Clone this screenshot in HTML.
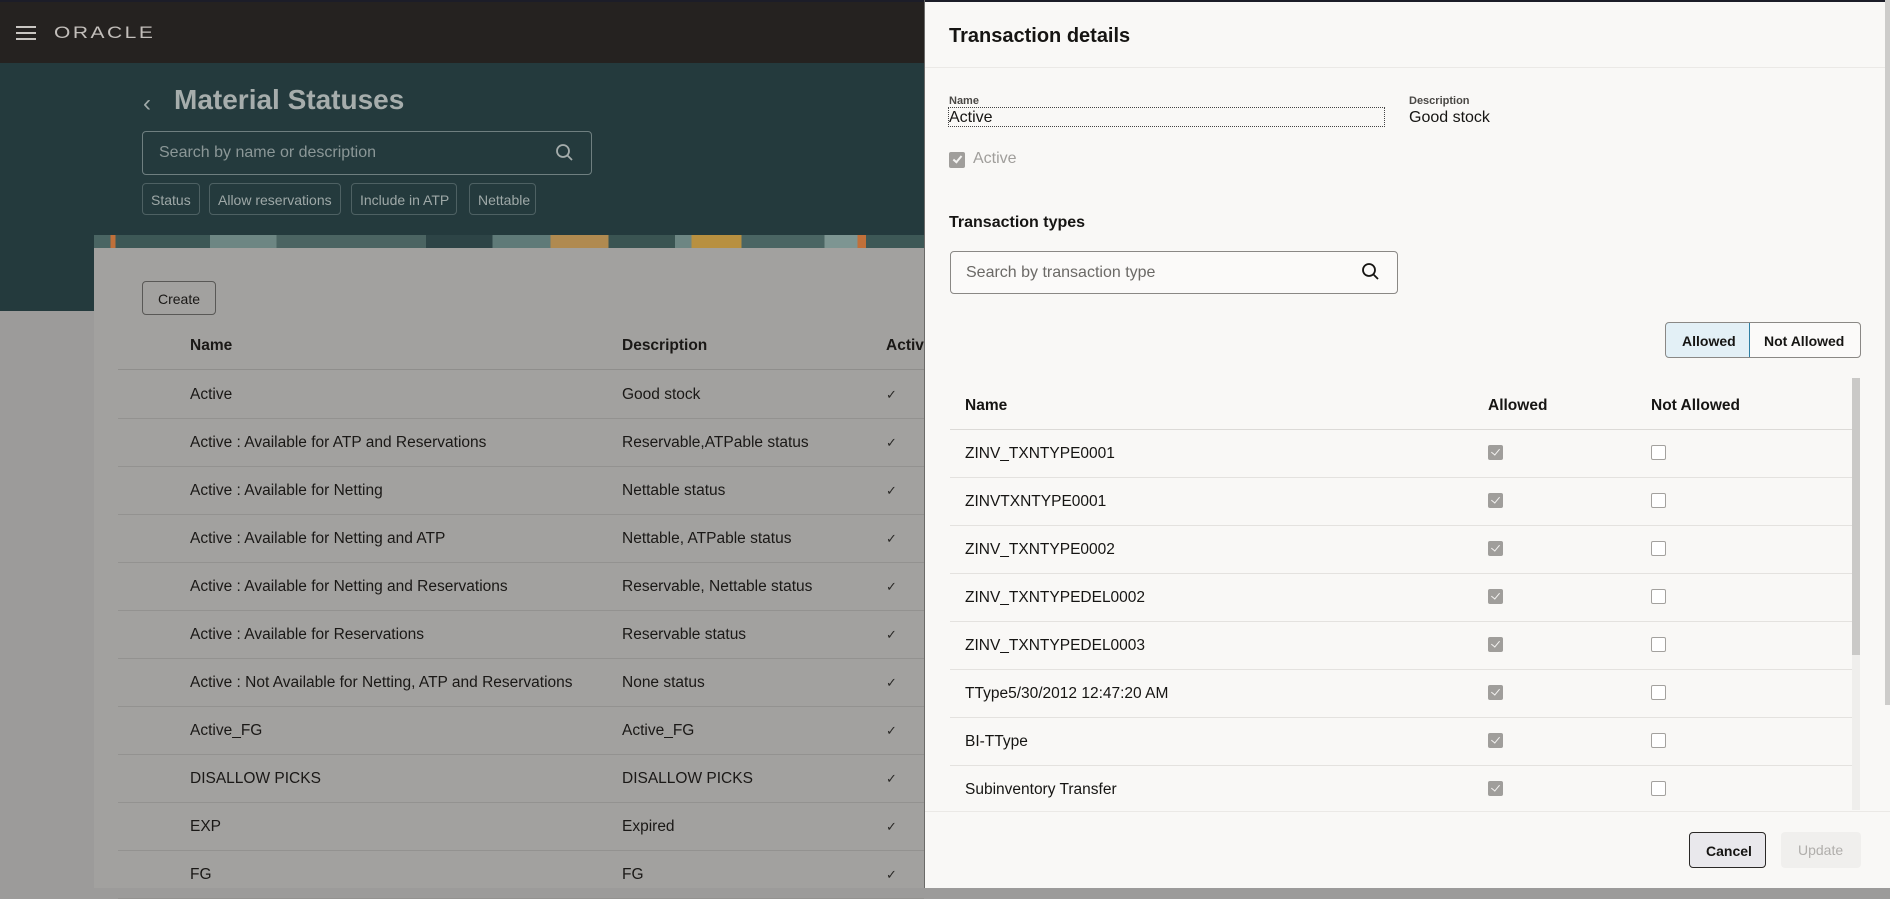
<!DOCTYPE html>
<html><head><meta charset="utf-8"><style>
*{box-sizing:border-box;margin:0;padding:0}
body{width:1890px;height:888px;overflow:hidden;position:relative;font-family:"Liberation Sans",sans-serif;background:#9c9b9a}
.a{position:absolute}
.top{left:0;top:0;width:1890px;height:63px;background:#252220;border-top:2px solid #1c1d28}
.teal{left:0;top:63px;width:924px;height:248px;background:#243a3d}
.card{left:94px;top:235px;width:830px;height:653px;background:#a2a19f}
.strip{left:94px;top:235px;width:830px;height:13px;background:linear-gradient(90deg,#4a6563 0 2%,#c0703a 2% 2.6%,#3d5856 2.6% 14%,#6d8683 14% 22%,#4b6462 22% 40%,#2d4446 40% 48%,#5f7a78 48% 55%,#b08a50 55% 62%,#3a5452 62% 70%,#6d8683 70% 72%,#b89040 72% 78%,#4a6563 78% 88%,#7d9592 88% 92%,#c0703a 92% 93%,#3d5856 93%)}
.row{position:absolute;left:118px;width:806px;height:48px;border-bottom:1px solid #939290;font-size:15.5px;color:#1a1816}
.row span{position:absolute;top:15px}
.row span.k{font-size:13px;color:#2a2826;top:16px}
.p{left:924px;top:0;width:966px;height:888px;background:#f9f8f6;border-left:1px solid #6b6a68}
.tr{position:absolute;left:25px;width:902px;height:48px;border-bottom:1px solid #e4e2df;font-size:15.5px;color:#161513}
.tr span{position:absolute;top:15px;left:15px}
.cb{position:absolute;width:15px;height:15px;border-radius:2px;top:15px}
.cb.on{background:#a09e9b;left:538px}
.cb.on::after{content:"";position:absolute;left:5px;top:2px;width:4px;height:7px;border:solid #f4f3f1;border-width:0 1.5px 1.5px 0;transform:rotate(40deg)}
.cb.off{border:1px solid #a3a19e;left:701px;background:#fff}
</style></head><body>
<div class="a top"></div>
<div class="a" style="left:16px;top:26px;width:20px;height:2px;background:#c9c6c2;box-shadow:0 6px 0 #c9c6c2,0 12px 0 #c9c6c2"></div>
<div class="a" style="left:54px;top:21px;font-size:21px;color:#c2beba;letter-spacing:2.5px;transform:scaleY(0.8);transform-origin:left center">ORACLE</div>
<div class="a teal"></div>
<div class="a" style="left:143px;top:90px;font-size:24px;color:#9fa9a8">‹</div>
<div class="a" style="left:174px;top:84px;font-size:28px;font-weight:bold;color:#a6adac">Material Statuses</div>
<div class="a" style="left:142px;top:131px;width:450px;height:44px;border:1px solid #6f7f80;border-radius:4px"></div>
<div class="a" style="left:159px;top:144px;font-size:16px;color:#8b9797">Search by name or description</div>
<svg class="a" style="left:555px;top:143px" width="20" height="20" viewBox="0 0 20 20"><circle cx="8" cy="8" r="6" fill="none" stroke="#a5adac" stroke-width="1.8"/><path d="M12.5 12.5L17 17" stroke="#a5adac" stroke-width="1.8"/></svg>
<div class="a" style="left:142px;top:183px;width:58px;height:32px;border:1px solid #4e6163;border-radius:4px;color:#9ea8a7;font-size:14px;padding:8px 0 0 8px">Status</div>
<div class="a" style="left:209px;top:183px;width:132px;height:32px;border:1px solid #4e6163;border-radius:4px;color:#9ea8a7;font-size:14px;padding:8px 0 0 8px">Allow reservations</div>
<div class="a" style="left:351px;top:183px;width:106px;height:32px;border:1px solid #4e6163;border-radius:4px;color:#9ea8a7;font-size:14px;padding:8px 0 0 8px">Include in ATP</div>
<div class="a" style="left:469px;top:183px;width:67px;height:32px;border:1px solid #4e6163;border-radius:4px;color:#9ea8a7;font-size:14px;padding:8px 0 0 8px">Nettable</div>
<div class="a card"></div>
<div class="a strip"></div>
<div class="a" style="left:142px;top:281px;width:74px;height:34px;border:1px solid #595856;border-radius:4px;font-size:14px;color:#1a1816;padding:9px 0 0 15px">Create</div>
<div class="row" style="top:322px;border-bottom-color:#8f8e8c"><span style="left:72px;font-weight:bold;font-size:15.5px">Name</span><span style="left:504px;font-weight:bold">Description</span><span style="left:768px;font-weight:bold">Activ</span></div>
<div class="row" style="top:371px"><span style="left:72px">Active</span><span style="left:504px">Good stock</span><span class="k" style="left:768px">✓</span></div>
<div class="row" style="top:419px"><span style="left:72px">Active : Available for ATP and Reservations</span><span style="left:504px">Reservable,ATPable status</span><span class="k" style="left:768px">✓</span></div>
<div class="row" style="top:467px"><span style="left:72px">Active : Available for Netting</span><span style="left:504px">Nettable status</span><span class="k" style="left:768px">✓</span></div>
<div class="row" style="top:515px"><span style="left:72px">Active : Available for Netting and ATP</span><span style="left:504px">Nettable, ATPable status</span><span class="k" style="left:768px">✓</span></div>
<div class="row" style="top:563px"><span style="left:72px">Active : Available for Netting and Reservations</span><span style="left:504px">Reservable, Nettable status</span><span class="k" style="left:768px">✓</span></div>
<div class="row" style="top:611px"><span style="left:72px">Active : Available for Reservations</span><span style="left:504px">Reservable status</span><span class="k" style="left:768px">✓</span></div>
<div class="row" style="top:659px"><span style="left:72px">Active : Not Available for Netting, ATP and Reservations</span><span style="left:504px">None status</span><span class="k" style="left:768px">✓</span></div>
<div class="row" style="top:707px"><span style="left:72px">Active_FG</span><span style="left:504px">Active_FG</span><span class="k" style="left:768px">✓</span></div>
<div class="row" style="top:755px"><span style="left:72px">DISALLOW PICKS</span><span style="left:504px">DISALLOW PICKS</span><span class="k" style="left:768px">✓</span></div>
<div class="row" style="top:803px"><span style="left:72px">EXP</span><span style="left:504px">Expired</span><span class="k" style="left:768px">✓</span></div>
<div class="row" style="top:851px"><span style="left:72px">FG</span><span style="left:504px">FG</span><span class="k" style="left:768px">✓</span></div>

<div class="a p">
<div class="a" style="left:0;top:0;width:966px;height:2px;background:#1c1d28"></div>
<div class="a" style="left:24px;top:25px;font-size:20px;font-weight:bold;color:#161513">Transaction details</div>
<div class="a" style="left:0;top:67px;width:966px;height:1px;background:#ebe9e6"></div>
<div class="a" style="left:24px;top:95px;font-size:11px;color:#4a4845;font-weight:bold">Name</div>
<div class="a" style="left:23px;top:107px;width:437px;height:20px;border:1px dotted #444"></div>
<div class="a" style="left:24px;top:109px;font-size:16px;color:#161513">Active</div>
<div class="a" style="left:484px;top:95px;font-size:11px;color:#4a4845;font-weight:bold">Description</div>
<div class="a" style="left:484px;top:109px;font-size:16px;color:#161513">Good stock</div>
<div class="a" style="left:24px;top:152px;width:16px;height:16px;background:#a09e9b;border-radius:2px"></div>
<div class="a" style="left:30px;top:154px;width:5px;height:9px;border:solid #f4f3f1;border-width:0 2px 2px 0;transform:rotate(40deg)"></div>
<div class="a" style="left:48px;top:150px;font-size:16px;color:#a09e9b">Active</div>
<div class="a" style="left:24px;top:214px;font-size:16px;font-weight:bold;color:#161513">Transaction types</div>
<div class="a" style="left:25px;top:251px;width:448px;height:43px;border:1px solid #8a8885;border-radius:4px;background:#fbfaf9"></div>
<div class="a" style="left:41px;top:264px;font-size:16px;color:#6b6966">Search by transaction type</div>
<svg class="a" style="left:436px;top:262px" width="20" height="20" viewBox="0 0 20 20"><circle cx="8" cy="8" r="6" fill="none" stroke="#161513" stroke-width="1.8"/><path d="M12.5 12.5L17 17" stroke="#161513" stroke-width="1.8"/></svg>
<div class="a" style="left:740px;top:322px;width:196px;height:36px;border:1px solid #8a8885;border-radius:4px;background:#fbfaf9;overflow:hidden">
<div class="a" style="left:-1px;top:-1px;width:85px;height:36px;background:#e3f0f6;border:1px solid #2f7fa3;border-radius:4px 0 0 4px;font-size:14px;font-weight:bold;color:#161513;padding:10px 0 0 16px">Allowed</div>
<div class="a" style="left:98px;top:10px;font-size:14px;font-weight:bold;color:#161513">Not Allowed</div>
</div>
<div class="tr" style="top:382px;border-bottom-color:#dcdad7"><span style="font-weight:bold">Name</span><span style="left:538px;font-weight:bold">Allowed</span><span style="left:701px;font-weight:bold">Not Allowed</span></div>
<div class="tr" style="top:430px"><span>ZINV_TXNTYPE0001</span><i class="cb on"></i><i class="cb off"></i></div>
<div class="tr" style="top:478px"><span>ZINVTXNTYPE0001</span><i class="cb on"></i><i class="cb off"></i></div>
<div class="tr" style="top:526px"><span>ZINV_TXNTYPE0002</span><i class="cb on"></i><i class="cb off"></i></div>
<div class="tr" style="top:574px"><span>ZINV_TXNTYPEDEL0002</span><i class="cb on"></i><i class="cb off"></i></div>
<div class="tr" style="top:622px"><span>ZINV_TXNTYPEDEL0003</span><i class="cb on"></i><i class="cb off"></i></div>
<div class="tr" style="top:670px"><span>TType5/30/2012 12:47:20 AM</span><i class="cb on"></i><i class="cb off"></i></div>
<div class="tr" style="top:718px"><span>BI-TType</span><i class="cb on"></i><i class="cb off"></i></div>
<div class="tr" style="top:766px;border-bottom:none"><span>Subinventory Transfer</span><i class="cb on"></i><i class="cb off"></i></div>
<div class="a" style="left:927px;top:378px;width:8px;height:432px;background:#efeeec"></div>
<div class="a" style="left:927px;top:378px;width:8px;height:277px;background:#cac9c7"></div>
<div class="a" style="left:0;top:811px;width:966px;height:1px;background:#ebe9e6"></div>
<div class="a" style="left:764px;top:832px;width:77px;height:36px;border:1.5px solid #2a2826;border-radius:4px;background:#e9e8ec;font-size:14px;font-weight:bold;color:#161513;padding:10px 0 0 16px">Cancel</div>
<div class="a" style="left:856px;top:832px;width:80px;height:36px;border-radius:4px;background:#f0efed;font-size:14px;color:#b0aeab;padding:10px 0 0 17px">Update</div>
<div class="a" style="left:960px;top:0;width:6px;height:705px;background:#cdccca"></div>
</div>
</body></html>
